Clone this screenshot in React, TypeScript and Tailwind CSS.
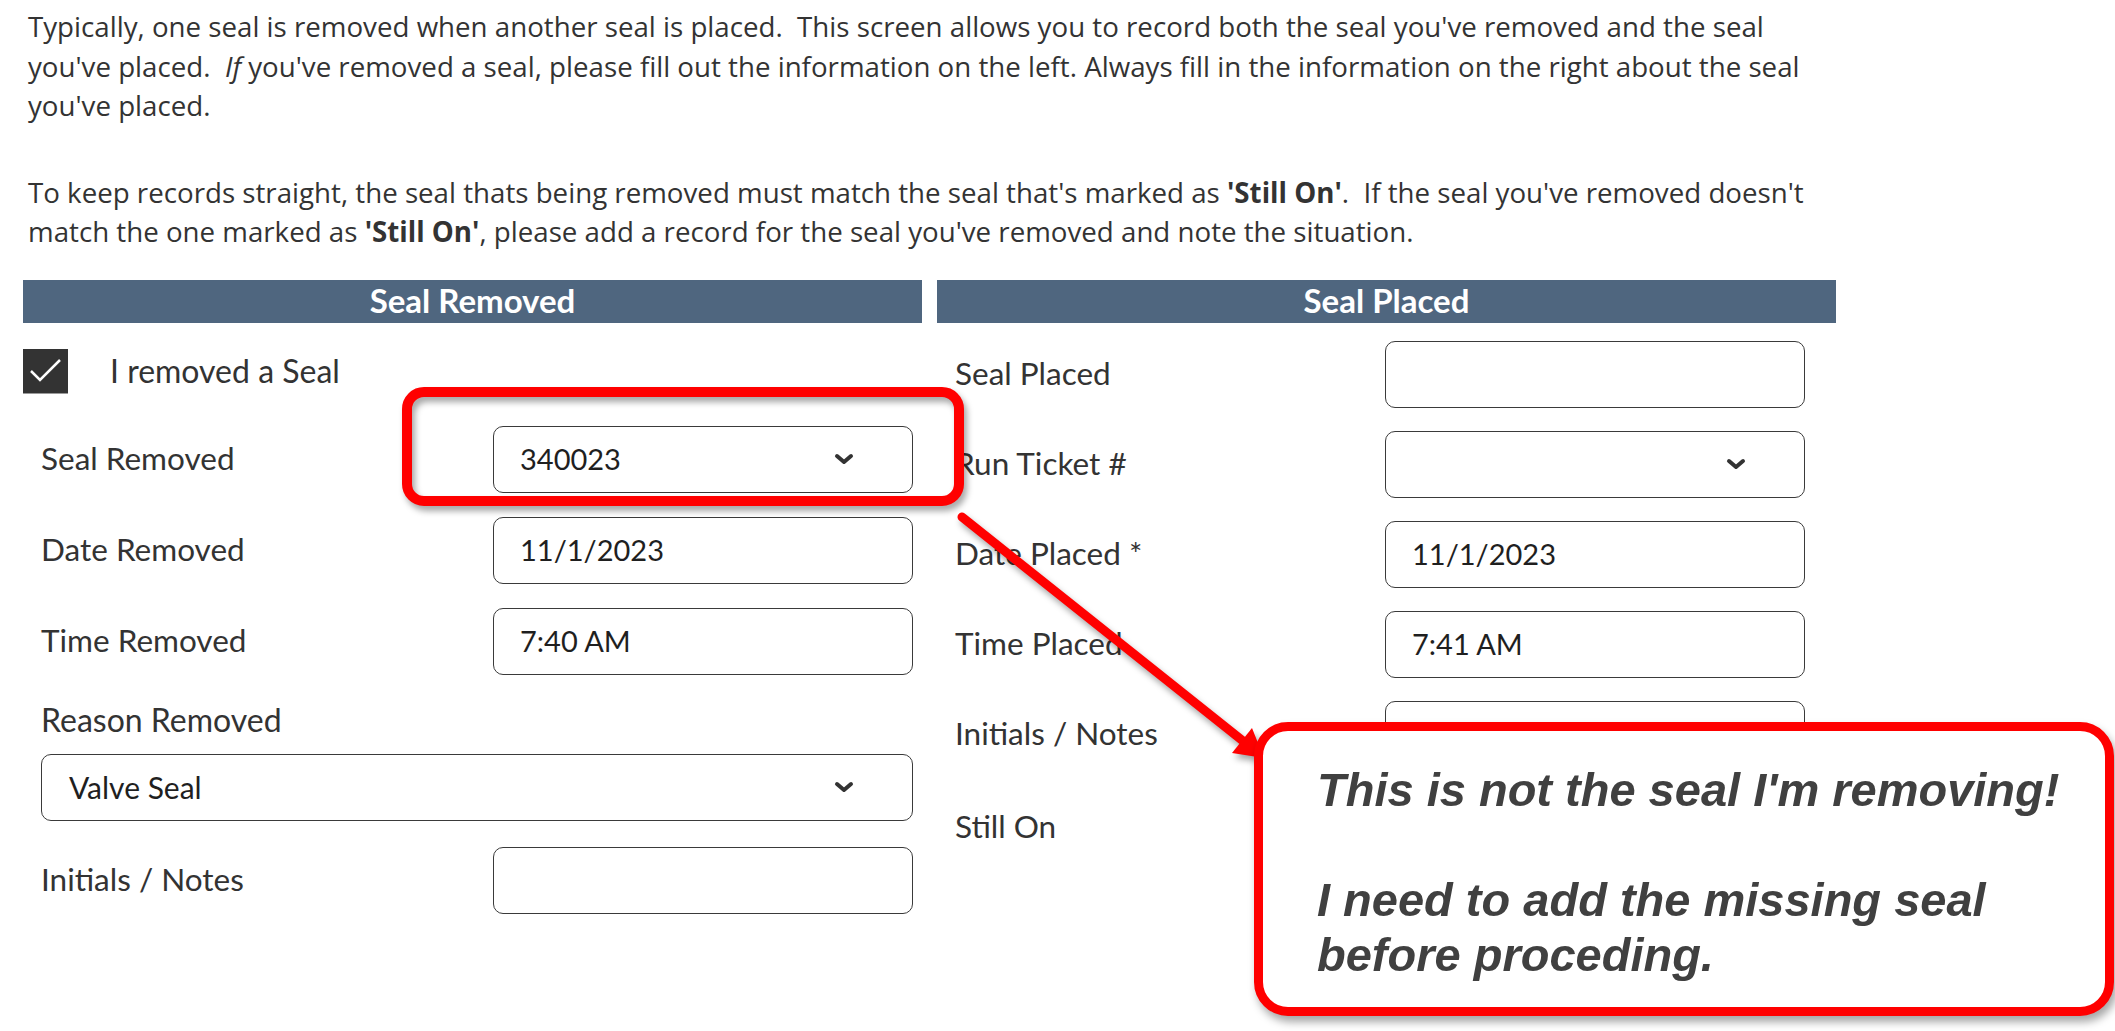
import React from "react";

function Chevron() {
  return (
    <svg width="20" height="12" viewBox="0 0 20 12" className="shrink-0">
      <path d="M3 3 L10 9 L17 3" fill="none" stroke="#333" strokeWidth="4" strokeLinecap="round" strokeLinejoin="round" />
    </svg>
  );
}

function Field({ value, dropdown, className = "" }: { value?: string; dropdown?: boolean; className?: string }) {
  return (
    <div
      className={`h-[67px] border border-[#3a3a3a] rounded-[10px] bg-white flex items-center justify-between pl-[26px] pr-[58px] text-[29px] text-[#1f1f1f] ${className}`}
    >
      <span>{value}</span>
      {dropdown && <Chevron />}
    </div>
  );
}

function Row({ label, labelWidth, value, dropdown }: { label: string; labelWidth: string; value?: string; dropdown?: boolean }) {
  return (
    <div className="flex items-center h-[67px]">
      <div className={`${labelWidth} pl-[18px] text-[31.5px] text-[#333]`}>{label}</div>
      <Field value={value} dropdown={dropdown} className="w-[420px]" />
    </div>
  );
}

export default function App() {
  return (
    <div
      className="relative w-[2115px] h-[1031px] bg-white overflow-hidden text-[#333]"
      style={{ fontFamily: "Lato, 'Open Sans', sans-serif" }}
    >
      {/* Intro text */}
      <div
        className="pl-[28px] pt-[7px] text-[27.7px] leading-[39.5px] whitespace-pre"
        style={{ fontFamily: "'Open Sans', Lato, sans-serif" }}
      >
        <p>
          Typically, one seal is removed when another seal is placed.  This screen allows you to record both the seal you've removed and the seal
          <br />
          you've placed.  <i>If</i> you've removed a seal, please fill out the information on the left. Always fill in the information on the right about the seal
          <br />
          you've placed.
        </p>
        <p className="mt-[47px]">
          To keep records straight, the seal thats being removed must match the seal that's marked as <b>'Still On'</b>.  If the seal you've removed doesn't
          <br />
          match the one marked as <b>'Still On'</b>, please add a record for the seal you've removed and note the situation.
        </p>
      </div>

      {/* Two panels */}
      <div className="mt-[28px] ml-[23px] flex gap-[15px]">
        {/* Seal Removed */}
        <div className="w-[899px]">
          <div className="h-[43px] bg-[#4f667f] text-white font-bold text-[33px] flex items-center justify-center">
            Seal Removed
          </div>
          <div className="mt-[26px] flex items-center h-[45px]">
            <div className="w-[45px] h-[45px] bg-[#333] border-b border-[#9a9a9a] flex items-center justify-center">
              <svg width="45" height="45" viewBox="0 0 45 45">
                <path d="M8 23 L17 32 L37 12" fill="none" stroke="white" strokeWidth="2.5" />
              </svg>
            </div>
            <span className="ml-[42px] text-[32px]">I removed a Seal</span>
          </div>
          <div className="mt-[32px] flex flex-col gap-[24px]">
            <Row label="Seal Removed" labelWidth="w-[470px]" value="340023" dropdown />
            <Row label="Date Removed" labelWidth="w-[470px]" value="11/1/2023" />
            <Row label="Time Removed" labelWidth="w-[470px]" value="7:40 AM" />
          </div>
          <div className="mt-[25px] pl-[18px] h-[40px] flex items-center text-[32px]">Reason Removed</div>
          <Field value="Valve Seal" dropdown className="mt-[14px] ml-[18px] w-[872px] pl-[27px] text-[30px]" />
          <div className="mt-[26px]">
            <Row label="Initials / Notes" labelWidth="w-[470px]" />
          </div>
        </div>

        {/* Seal Placed */}
        <div className="w-[899px]">
          <div className="h-[43px] bg-[#4f667f] text-white font-bold text-[33px] flex items-center justify-center">
            Seal Placed
          </div>
          <div className="mt-[18px] flex flex-col gap-[23px]">
            <Row label="Seal Placed" labelWidth="w-[448px]" />
            <Row label="Run Ticket #" labelWidth="w-[448px]" dropdown />
            <Row label="Date Placed *" labelWidth="w-[448px]" value="11/1/2023" />
            <Row label="Time Placed" labelWidth="w-[448px]" value="7:41 AM" />
            <Row label="Initials / Notes" labelWidth="w-[448px]" />
            <div className="flex items-center h-[67px] pl-[18px] text-[31.5px] pt-[6px]">Still On</div>
          </div>
        </div>
      </div>

      {/* Annotation: highlight around Seal Removed dropdown */}
      <div className="absolute left-[402px] top-[387px] w-[562px] h-[119px] border-[10px] border-[#ff0000] rounded-[22px] drop-shadow-[3px_5px_3px_rgba(0,0,0,0.35)] pointer-events-none" />

      {/* Annotation arrow */}
      <svg
        className="absolute left-0 top-0 pointer-events-none drop-shadow-[3px_5px_3px_rgba(0,0,0,0.35)]"
        width="2115"
        height="1031"
        viewBox="0 0 2115 1031"
      >
        <line x1="962" y1="517" x2="1243" y2="741" stroke="#ff0000" strokeWidth="9" strokeLinecap="round" />
        <polygon points="1232,753 1252,728 1264,758" fill="#ff0000" />
      </svg>

      {/* Annotation callout */}
      <div
        className="absolute left-[1254px] top-[722px] w-[860px] h-[294px] bg-white border-[9px] border-[#ff0000] rounded-[34px] drop-shadow-[3px_6px_4px_rgba(0,0,0,0.35)] pl-[54px] pt-[31px] text-[47px] leading-[55px] font-bold italic text-[#404040] whitespace-pre"
        style={{ fontFamily: "'Liberation Sans', Arial, sans-serif" }}
      >
        This is not the seal I'm removing!
        <br />
        <br />
        I need to add the missing seal
        <br />
        before proceding.
      </div>
    </div>
  );
}
